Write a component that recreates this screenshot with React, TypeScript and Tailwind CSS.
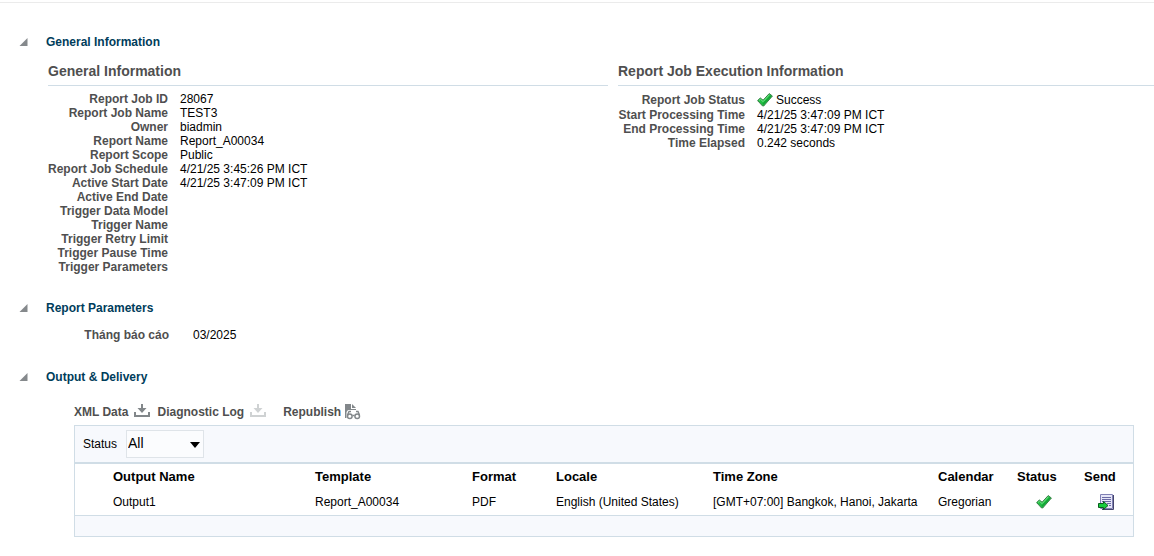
import React, { useState } from "react";

const GENERAL_INFO = [
  { label: "Report Job ID", value: "28067" },
  { label: "Report Job Name", value: "TEST3" },
  { label: "Owner", value: "biadmin" },
  { label: "Report Name", value: "Report_A00034" },
  { label: "Report Scope", value: "Public" },
  { label: "Report Job Schedule", value: "4/21/25 3:45:26 PM ICT" },
  { label: "Active Start Date", value: "4/21/25 3:47:09 PM ICT" },
  { label: "Active End Date", value: "" },
  { label: "Trigger Data Model", value: "" },
  { label: "Trigger Name", value: "" },
  { label: "Trigger Retry Limit", value: "" },
  { label: "Trigger Pause Time", value: "" },
  { label: "Trigger Parameters", value: "" },
];

const EXECUTION_INFO = [
  { label: "Start Processing Time", value: "4/21/25 3:47:09 PM ICT" },
  { label: "End Processing Time", value: "4/21/25 3:47:09 PM ICT" },
  { label: "Time Elapsed", value: "0.242 seconds" },
];

const OUTPUTS = [
  {
    name: "Output1",
    template: "Report_A00034",
    format: "PDF",
    locale: "English (United States)",
    timeZone: "[GMT+07:00] Bangkok, Hanoi, Jakarta",
    calendar: "Gregorian",
  },
];

function CheckIcon() {
  return (
    <svg viewBox="0 0 16 16" className="h-4 w-4 shrink-0" aria-hidden="true">
      <path d="M.6 8.600 3.300 6l2.800 2.200L12.200 1.600l3.200 2.400-8.700 10H5.600z" fill="#22bf45" stroke="#3b7f49" strokeWidth="1" strokeLinejoin="round" />
      <path d="M2 8.500 3.400 7.300l2.800 2.300 6.200-6.900" fill="none" stroke="#74e287" strokeWidth="1" />
      <path d="M5.900 12.300 13.900 4" fill="none" stroke="#12a336" strokeWidth="1.400" />
    </svg>
  );
}

function DownloadIcon({ className }: { className: string }) {
  return (
    <svg viewBox="0 0 16 16" className={`h-4 w-4 shrink-0 ${className}`} fill="currentColor" aria-hidden="true">
      <path d="M7 0h2v4h3.500L8 9 3.500 4H7z" />
      <path d="M0 8h2v3h12V8h2v5H0z" />
    </svg>
  );
}

function RepublishIcon() {
  return (
    <svg viewBox="0 0 16 16" className="h-4 w-4 shrink-0 text-[#82878a]" aria-hidden="true">
      <path d="M0 0h6v5h5v1H3L1.500 8v6H0z" fill="currentColor" />
      <path d="M7 0l4 4H7z" fill="currentColor" />
      <path d="M2.500 11 4 7.500h2M14.500 11 13 7.500h-2M7.500 11.500h2" fill="none" stroke="currentColor" strokeWidth="1.400" />
      <circle cx="4.800" cy="12.200" r="2.300" fill="#fff" stroke="currentColor" strokeWidth="1.500" />
      <circle cx="12.200" cy="12.200" r="2.300" fill="#fff" stroke="currentColor" strokeWidth="1.500" />
    </svg>
  );
}

function SendIcon() {
  return (
    <svg viewBox="0 0 16 16" className="h-4 w-4" aria-hidden="true">
      <path d="M2.500.5h12v14h-12z" fill="#e6e6f7" stroke="#8080b4" />
      <path d="M15.500 1v14.500H4" fill="none" stroke="#44446c" />
      <path d="M4 3.500h9M4 5.500h9M4 7.500h9M9 9.500h4M11 11.500h2" stroke="#6a6aa4" />
      <path d="M.5 9.500h5v-2l4.500 4-4.500 4v-2h-5z" fill="#14cc3c" stroke="#0b5c1e" strokeLinejoin="round" />
    </svg>
  );
}

type SectionProps = { title: string; className?: string; children: React.ReactNode };

function Section({ title, className = "", children }: SectionProps) {
  const [isOpen, setIsOpen] = useState(true);

  return (
    <section className={className}>
      <h2>
        <button
          type="button"
          aria-expanded={isOpen}
          onClick={() => setIsOpen(!isOpen)}
          className="flex h-5 items-center gap-[18px] pl-[19px] font-bold text-[#003d5b]"
        >
          <svg viewBox="0 0 9 9" className="h-[9px] w-[9px]" aria-hidden="true">
            <path d="M8.500 0v8H.5z" fill="#85898c" />
          </svg>
          {title}
        </button>
      </h2>
      {isOpen && children}
    </section>
  );
}

function SubHeading({ children }: { children: React.ReactNode }) {
  return (
    <h3 className="mb-1.5 h-6 border-b border-[#d0dde6] text-sm leading-[18px] font-bold text-[#4f4f4f]">
      {children}
    </h3>
  );
}

function InfoRow({ label, value }: { label: string; value: string }) {
  return (
    <>
      <dt className="text-right font-bold whitespace-nowrap text-[#4f4f4f]">{label}</dt>
      <dd>{value}</dd>
    </>
  );
}

export default function App() {
  const [status, setStatus] = useState("All");
  const rows = status === "Failed" ? [] : OUTPUTS;

  return (
    <main className="mt-0.5 border-t border-[#ebebeb] bg-white pt-[29px] font-['Liberation_Sans',Arial,sans-serif] text-xs leading-[14px] text-black">
      <Section title="General Information">
        <div className="mt-[10px] grid grid-cols-[560fr_536fr] gap-[10px] pl-12">
          <div>
            <SubHeading>General Information</SubHeading>
            <dl className="grid auto-rows-[14px] grid-cols-[120px_1fr] gap-x-3">
              {GENERAL_INFO.map((item) => (
                <InfoRow key={item.label} {...item} />
              ))}
            </dl>
          </div>
          <div>
            <SubHeading>Report Job Execution Information</SubHeading>
            <dl className="grid grid-cols-[127px_1fr] gap-x-3">
              <dt className="text-right leading-4 font-bold text-[#4f4f4f]">Report Job Status</dt>
              <dd className="flex items-center gap-[3px] leading-4">
                <CheckIcon />
                Success
              </dd>
              {EXECUTION_INFO.map((item) => (
                <InfoRow key={item.label} {...item} />
              ))}
            </dl>
          </div>
        </div>
      </Section>

      <Section title="Report Parameters" className="mt-6">
        <dl className="mt-[10px] grid grid-cols-[121px_1fr] gap-x-6 pl-12">
          <InfoRow label="Tháng báo cáo" value="03/2025" />
        </dl>
      </Section>

      <Section title="Output & Delivery" className="mt-[25px]">
        <div className="mt-[17px] mr-5 ml-[74px]">
          {/* Toolbar */}
          <div className="flex h-[21px] items-start font-bold text-[#4f4f4f]">
            <button type="button" className="flex items-center gap-1.5">
              XML Data
              <DownloadIcon className="text-[#82878a]" />
            </button>
            <button type="button" className="ml-[7px] flex items-center gap-1.5">
              Diagnostic Log
              <DownloadIcon className="text-[#cfd2d3]" />
            </button>
            <button type="button" className="ml-[17px] flex items-center gap-1">
              Republish
              <RepublishIcon />
            </button>
          </div>

          {/* Output table */}
          <div className="border border-[#d0dde6] bg-[#f7f9fd]">
            <div className="flex h-9 items-center gap-[9px] pl-2">
              <label htmlFor="status-filter">Status</label>
              <div className="relative">
                <select
                  id="status-filter"
                  value={status}
                  onChange={(e) => setStatus(e.target.value)}
                  className="block h-7 w-[78px] appearance-none border border-[#dfe4e9] bg-[#fbfcfe] pb-0.5 pl-px text-sm"
                >
                  <option>All</option>
                  <option>Success</option>
                  <option>Failed</option>
                </select>
                <svg viewBox="0 0 10 6" className="pointer-events-none absolute top-3 right-1 h-1.5 w-2.5" aria-hidden="true">
                  <path d="M0 0h10L5 6z" />
                </svg>
              </div>
            </div>
            <table className="w-full table-fixed border-y border-t-2 border-[#d0dde6] bg-white text-left">
              <colgroup>
                <col className="w-[38px]" />
                <col className="w-[202px]" />
                <col className="w-[157px]" />
                <col className="w-[84px]" />
                <col className="w-[157px]" />
                <col className="w-[225px]" />
                <col className="w-[79px]" />
                <col className="w-[67px]" />
                <col className="w-[49px]" />
              </colgroup>
              <thead className="text-[13px]">
                <tr className="h-[26px]">
                  <td />
                  <th>Output Name</th>
                  <th>Template</th>
                  <th>Format</th>
                  <th>Locale</th>
                  <th>Time Zone</th>
                  <th>Calendar</th>
                  <th>Status</th>
                  <th>Send</th>
                </tr>
              </thead>
              <tbody className="whitespace-nowrap">
                {rows.map((row) => (
                  <tr key={row.name} className="h-[26px]">
                    <td />
                    <td>{row.name}</td>
                    <td>{row.template}</td>
                    <td>{row.format}</td>
                    <td>{row.locale}</td>
                    <td>{row.timeZone}</td>
                    <td>{row.calendar}</td>
                    <td className="pl-[19px]">
                      <CheckIcon />
                    </td>
                    <td className="pl-3.5">
                      <button type="button" aria-label="Send" className="block">
                        <SendIcon />
                      </button>
                    </td>
                  </tr>
                ))}
              </tbody>
            </table>
            <div className="h-5" />
          </div>
        </div>
      </Section>
    </main>
  );
}
